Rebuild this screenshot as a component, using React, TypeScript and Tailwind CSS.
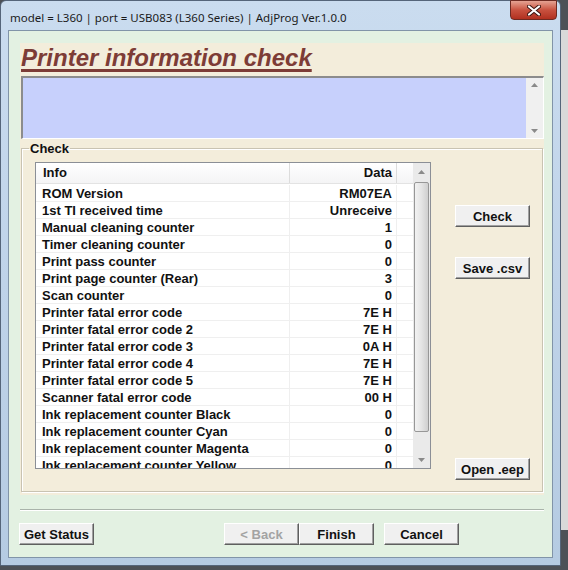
import React from 'react';

const rows: [string, string][] = [
  ['ROM Version', 'RM07EA'],
  ['1st TI received time', 'Unreceive'],
  ['Manual cleaning counter', '1'],
  ['Timer cleaning counter', '0'],
  ['Print pass counter', '0'],
  ['Print page counter (Rear)', '3'],
  ['Scan counter', '0'],
  ['Printer fatal error code', '7E H'],
  ['Printer fatal error code 2', '7E H'],
  ['Printer fatal error code 3', '0A H'],
  ['Printer fatal error code 4', '7E H'],
  ['Printer fatal error code 5', '7E H'],
  ['Scanner fatal error code', '00 H'],
  ['Ink replacement counter Black', '0'],
  ['Ink replacement counter Cyan', '0'],
  ['Ink replacement counter Magenta', '0'],
  ['Ink replacement counter Yellow', '0'],
];

function Btn({ label, disabled, className = '' }: { label: string; disabled?: boolean; className?: string }) {
  return (
    <button
      type="button"
      className={`h-[22px] w-[75px] border border-t-white border-l-white border-b-[#5f5f5f] border-r-[#5f5f5f] bg-[#f0f0f0] text-[13px] font-bold leading-none shadow-[inset_-1px_-1px_0_#a0a0a0] ${
        disabled ? 'text-[#a3a3a3]' : 'text-[#111]'
      } ${className}`}
    >
      {label}
    </button>
  );
}

function Arrow({ up }: { up?: boolean }) {
  return (
    <svg width="7" height="4" viewBox="0 0 7 4" className="text-[#8a8a8a]">
      <path d={up ? 'M0 4 L3.5 0 L7 4 Z' : 'M0 0 L3.5 4 L7 0 Z'} fill="currentColor" />
    </svg>
  );
}

export default function App() {
  return (
    <div className="relative flex h-[570px] w-[568px] overflow-hidden bg-[#4d5157] font-['Liberation_Sans',Arial,sans-serif]">
      {/* window */}
      <div className="relative flex h-[566px] w-[561px] shrink-0 flex-col rounded-t-[6px] border border-[#55657a] bg-gradient-to-b from-[#cadcef] via-[#bfd3e9] to-[#b5cbe2]">
        <div className="flex h-[29px] shrink-0 items-center pl-[9px] pt-[4px] font-['Noto_Sans',sans-serif] text-[11.5px] text-[#1b1b1b]">
          model = L360 | port = USB083 (L360 Series) | AdjProg Ver.1.0.0
        </div>
        <div className="absolute right-[3px] top-[-1px] flex h-[20px] w-[47px] items-center justify-center rounded-b-[4px] border border-[#6d2a22] bg-gradient-to-b from-[#e4a293] via-[#c8513f] to-[#b1301f]">
          <svg width="14" height="11" viewBox="0 0 14 11">
            <path d="M2 1.5 L12 9.5 M12 1.5 L2 9.5" stroke="#3a1410" strokeWidth="4" strokeLinecap="round" />
            <path d="M2 1.5 L12 9.5 M12 1.5 L2 9.5" stroke="#ffffff" strokeWidth="2.2" strokeLinecap="round" />
          </svg>
        </div>

        {/* client area */}
        <div className="mx-[7px] flex h-[528px] flex-col border border-[#8194a8] bg-[#e3f1e2]">
          <div className="ml-[11px] mt-[12px] flex h-[452px] w-[524px] flex-col bg-[#f3eddb]">
            <div className="h-[33px] pl-[1px] pt-[1px]">
              <span className="text-[24px] font-bold italic leading-[28px] text-[#7d3c36] underline decoration-[3px] underline-offset-[3px]">
                Printer information check
              </span>
            </div>
            <div className="flex h-[63px] w-[523px] ml-[1px] border-l-2 border-t-2 border-l-[#8c8c8c] border-t-[#8c8c8c] border-b border-r border-b-white border-r-white bg-[#c7d0fc]">
              <div className="flex-1" />
              <div className="flex w-[17px] flex-col items-center justify-between bg-[#f0f0f0] py-[5px]">
                <Arrow up />
                <Arrow />
              </div>
            </div>

            <fieldset className="mx-[1px] mt-[2px] h-[351px] border border-[#c9c3b2] px-[7px] pt-0 shadow-[1px_1px_0_#ffffff,inset_1px_1px_0_#ffffff]">
              <legend className="px-[1px] text-[13px] font-bold leading-[15px] text-[#111]">Check</legend>
              <div className="mt-[6px] flex">
                <div className="ml-[6px] flex h-[307px] w-[396px] border border-[#8b8f96] bg-white">
                  <div className="flex flex-1 flex-col overflow-hidden">
                    <div className="flex h-[21px] shrink-0 border-b border-[#e3e3e3] bg-gradient-to-b from-white to-[#f4f4f5] text-[13px] font-bold text-[#111]">
                      <div className="flex w-[254px] items-center border-r border-[#dcdcdc] pl-[7px]">Info</div>
                      <div className="flex w-[107px] items-center justify-end border-r border-[#dcdcdc] pr-[4px]">Data</div>
                    </div>
                    <div className="mt-[1px]">
                      {rows.map(([k, v]) => (
                        <div key={k} className="flex h-[17px] border-b border-[#efefef] text-[13px] font-bold leading-[17px] text-[#111]">
                          <div className="w-[254px] border-r border-[#efefef] pl-[6px]">{k}</div>
                          <div className="w-[107px] border-r border-[#efefef] pr-[4px] text-right">{v}</div>
                        </div>
                      ))}
                    </div>
                  </div>
                  <div className="flex w-[17px] shrink-0 flex-col items-center bg-[#eaeaea]">
                    <div className="flex h-[17px] items-center">
                      <Arrow up />
                    </div>
                    <div className="mt-[2px] h-[250px] w-[15px] rounded-[2px] border border-[#979797] bg-gradient-to-r from-[#f2f2f2] via-[#e4e4e4] to-[#cfcfcf]" />
                    <div className="flex-1" />
                    <div className="flex h-[17px] items-center">
                      <Arrow />
                    </div>
                  </div>
                </div>
                <div className="ml-[24px] flex flex-col pt-[43px]">
                  <Btn label="Check" className="border-[#3c3c3c]" />
                  <Btn label="Save .csv" className="mt-[30px]" />
                  <Btn label="Open .eep" className="mt-[179px]" />
                </div>
              </div>
            </fieldset>
          </div>

          <div className="ml-[11px] mt-[14px] h-[2px] w-[524px] border-t border-b border-t-[#a9b3aa] border-b-white" />
          <div className="ml-[10px] mt-[12px] flex">
            <Btn label="Get Status" />
            <Btn label="< Back" disabled className="ml-[130px]" />
            <Btn label="Finish" />
            <Btn label="Cancel" className="ml-[10px]" />
          </div>
        </div>
      </div>
      <div className="mt-[30px] h-[500px] flex-1 bg-[#d9d9d9]" />
    </div>
  );
}
